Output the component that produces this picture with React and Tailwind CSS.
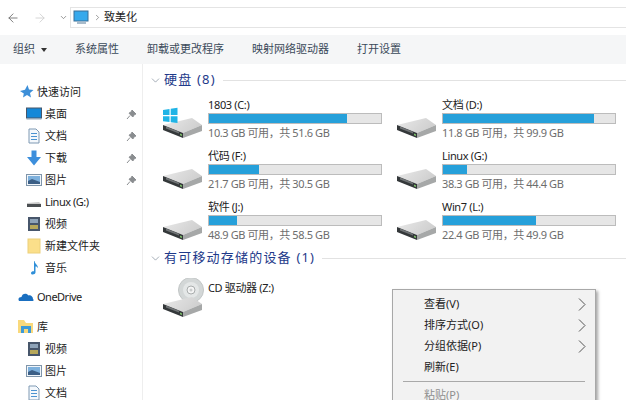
import { ArrowLeft, ArrowRight, ChevronDown, ChevronRight } from 'lucide-react';

const font = { fontFamily: '"Noto Sans", "Noto Sans CJK SC", sans-serif' };

const drives = [
  { name: '1803 (C:)', free: '10.3 GB 可用，共 51.6 GB', used: 80, win: true },
  { name: '文档 (D:)', free: '11.8 GB 可用，共 99.9 GB', used: 88 },
  { name: '代码 (F:)', free: '21.7 GB 可用，共 30.5 GB', used: 29 },
  { name: 'Linux (G:)', free: '38.3 GB 可用，共 44.4 GB', used: 14 },
  { name: '软件 (J:)', free: '48.9 GB 可用，共 58.5 GB', used: 16 },
  { name: 'Win7 (L:)', free: '22.4 GB 可用，共 49.9 GB', used: 54 },
];

// Hard disk drawing, shared by all the drive rows
function Hdd({ win, cd }) {
  return (
    <svg width="42" height="42" viewBox="0 0 42 42" className="shrink-0">
      <defs>
        <linearGradient id="hddTop" x1="0" y1="0" x2="1" y2="0.4">
          <stop offset="0" stopColor="#e9e9e9" />
          <stop offset="1" stopColor="#cfcfcf" />
        </linearGradient>
      </defs>
      {cd && (
        <g>
          <circle cx="29" cy="12" r="12.5" fill="#d3d7d7" stroke="#c2c6c6" />
          <circle cx="29" cy="12" r="8" fill="#e4e7e7" />
          <circle cx="29" cy="12" r="4" fill="#f5f5f5" stroke="#a9adad" />
          <circle cx="29" cy="12" r="1.5" fill="#c9cccc" />
        </g>
      )}
      <path d="M1 26 L30 19 L40 26 L21 34 Z" fill="url(#hddTop)" />
      <path d="M1 26 L21 34 L21 39 L1 31 Z" fill="#34383a" />
      <path d="M21 34 L40 26 L40 32 L21 39 Z" fill="#a6a8a8" />
      <path d="M4 27.5 L17 32.8 L17 34.5 L4 29.5 Z" fill="#6f7375" />
      <path d="M18 34.6 L20 35.4 L20 37 L18 36.2 Z" fill="#7fc36b" />
      {win && (
        <g fill="#20b4e6">
          <path d="M1 11 L7.5 10 L7.5 16 L1 16 Z" />
          <path d="M8.7 9.7 L15.5 8.7 L15.5 16 L8.7 16 Z" />
          <path d="M1 17.2 L7.5 17.2 L7.5 23 L1 22.2 Z" />
          <path d="M8.7 17.2 L15.5 17.2 L15.5 24 L8.7 23.2 Z" />
        </g>
      )}
    </svg>
  );
}

function Pin() {
  return (
    <svg width="11" height="11" viewBox="0 0 11 11" className="shrink-0">
      <path d="M6 1 L10 5 L8.5 5.5 L6.8 8 L3 4.2 L5.5 2.5 Z M4 6.5 L1 10" fill="#8a8d90" stroke="#8a8d90" />
    </svg>
  );
}

function Ico({ kind }) {
  if (kind === 'star') return (
    <svg width="16" height="16" viewBox="0 0 16 16"><path d="M9.5 1 L11 5.5 L15.5 6 L12 9 L13 13.5 L9 11 L5 13.5 L5.8 9.5 L2 7 L7 5.8 Z" fill="#3d8fd8" /></svg>
  );
  if (kind === 'desktop') return (
    <svg width="16" height="16" viewBox="0 0 16 16"><rect x="0.5" y="2" width="15" height="10" fill="#1488d8" stroke="#46566a" /><rect x="0.5" y="12" width="15" height="1.5" fill="#8fa3b5" /></svg>
  );
  if (kind === 'doc') return (
    <svg width="16" height="16" viewBox="0 0 16 16"><path d="M3 1 H10 L13 4 V15 H3 Z" fill="#f4f8fc" stroke="#7e99b3" /><rect x="5" y="5" width="6" height="1" fill="#4b93d1" /><rect x="5" y="8" width="6" height="1" fill="#4b93d1" /><rect x="5" y="11" width="6" height="1" fill="#4b93d1" /></svg>
  );
  if (kind === 'down') return (
    <svg width="16" height="16" viewBox="0 0 16 16"><path d="M5.5 0.5 H10.5 V7 H15 L8 15.5 L1 7 H5.5 Z" fill="#3d8fdc" /></svg>
  );
  if (kind === 'pic') return (
    <svg width="16" height="16" viewBox="0 0 16 16"><rect x="0.5" y="2.5" width="15" height="11" fill="#f0f5fa" stroke="#7f95aa" /><path d="M2 4 H14 V12 H2 Z" fill="#7eb1dd" /><path d="M2 9 L6 7 L14 10 V12 H2 Z" fill="#3c5f86" /></svg>
  );
  if (kind === 'drive') return (
    <svg width="16" height="16" viewBox="0 0 16 16"><path d="M1 9 L13 8 L15 10 H1 Z" fill="#c9c9c9" /><rect x="1" y="10" width="14" height="3" fill="#4b4f52" /></svg>
  );
  if (kind === 'video') return (
    <svg width="16" height="16" viewBox="0 0 16 16"><rect x="2" y="1" width="12" height="14" fill="#47566b" /><rect x="4" y="3" width="8" height="4" fill="#8ea3b8" /><rect x="4" y="9" width="8" height="4" fill="#b7a85a" /></svg>
  );
  if (kind === 'folder') return (
    <svg width="16" height="16" viewBox="0 0 16 16"><rect x="2" y="1" width="12" height="14" fill="#fbdf8a" stroke="#ecd07a" /></svg>
  );
  if (kind === 'music') return (
    <svg width="16" height="16" viewBox="0 0 16 16"><path d="M8 1 L8.5 1 C9 4 12 5 12 8 L10.5 6.5 L9.5 6.5 V12.5 C9.5 14.5 5 15.5 5 13 C5 11.5 7 11 8 11.3 Z" fill="#2f8fd8" /></svg>
  );
  if (kind === 'cloud') return (
    <svg width="16" height="16" viewBox="0 0 16 16"><path d="M1 12 C-0.5 9.5 1.5 8 3.5 8 C4 4.5 8.5 3.5 10.5 6.5 C13 5.8 15 8 15 10 C16 11 15.5 12 15 12 Z" fill="#1a6fc0" /></svg>
  );
  if (kind === 'lib') return (
    <svg width="16" height="16" viewBox="0 0 16 16"><path d="M0 1 H6 L8 4 H15 V14 H0 Z" fill="#f9d97c" /><path d="M3 7 H13 V14 H10 V10 H6 V14 H3 Z" fill="#3d9ad8" /></svg>
  );
  return null;
}

function NavRow({ icon, label, pin, top, latin, cn }) {
  return (
    <div className={`flex h-[22px] items-center text-[11px] text-[#222] ${top ? 'pl-[18px]' : 'pl-[26px]'} ${cn || ''}`}>
      <span className="flex w-[19px] shrink-0"><Ico kind={icon} /></span>
      <span className={`flex-1 ${latin ? 'tracking-[-0.5px]' : ''}`}>{label}</span>
      {pin && <span className="mr-[5px]"><Pin /></span>}
    </div>
  );
}

function DriveItem({ d }) {
  return (
    <div className="flex h-[51px] items-start">
      <div className="mt-[3px] w-[46px] shrink-0"><Hdd win={d.win} /></div>
      <div className="w-[174px]">
        <div className="h-[17px] text-[11px] leading-[17px] tracking-[-0.35px] text-[#222]">{d.name}</div>
        <div className="h-[11px] border border-[#bcbcbc] bg-[#e6e6e6]">
          <div className="h-full bg-[#26a0da]" style={{ width: `${d.used}%` }} />
        </div>
        <div className="h-[17px] text-[11px] leading-[17px] tracking-[-0.4px] text-[#6d6d6d]">{d.free}</div>
      </div>
    </div>
  );
}

function GroupTitle({ title, cn }) {
  return (
    <div className={`flex h-[22px] items-center ${cn || ''}`}>
      <ChevronDown size={13} strokeWidth={1} className="text-[#5a6a7a]" />
      <span className="ml-[2px] text-[13px] tracking-[1.2px] text-[#1e3a8a]">{title}</span>
      <div className="ml-[7px] h-px flex-1 bg-[#e2e2e2]" />
    </div>
  );
}

function MenuRow({ label, arrow, off }) {
  return (
    <div className={`flex h-[21px] items-center pl-[31px] pr-[9px] text-[11px] ${off ? 'text-[#8f8f8f]' : 'text-[#222]'}`}>
      <span className="flex-1">{label}</span>
      {arrow && (
        <svg width="8" height="13" viewBox="0 0 8 13" className="shrink-0">
          <path d="M1 0.5 L7 6.5 L1 12.5" fill="none" stroke="#555" strokeWidth="1" />
        </svg>
      )}
    </div>
  );
}

export default function App() {
  return (
    <div className="relative flex h-[400px] w-[626px] flex-col overflow-hidden bg-white" style={font}>
      {/* address bar */}
      <div className="flex h-[35px] shrink-0 items-center pl-[6px]">
        <ArrowLeft size={14} strokeWidth={1.5} className="text-[#6e6e6e]" />
        <ArrowRight size={14} strokeWidth={1.5} className="ml-[13px] text-[#d0d0d0]" />
        <ChevronDown size={9} strokeWidth={2} className="ml-[12px] text-[#777]" />
        <div className="ml-[2px] flex h-[21px] flex-1 items-center border-y border-l border-[#e4e4e4] pl-[1px]">
          <svg width="18" height="16" viewBox="0 0 18 16">
            <rect x="2" y="1" width="14" height="10" fill="#37a9ec" stroke="#3b6f97" />
            <rect x="5" y="12" width="9" height="2" fill="#a9bccb" />
          </svg>
          <ChevronRight size={9} strokeWidth={1.5} className="ml-[3px] text-[#555]" />
          <span className="ml-[2px] text-[11px] text-[#222]">致美化</span>
        </div>
      </div>

      {/* toolbar */}
      <div className="flex h-[29px] shrink-0 items-center bg-[#f5f6f7] pl-[13px] text-[11px] text-[#3b4a5a]">
        <span>组织</span>
        <span className="ml-[6px] h-0 w-0 border-x-[3.5px] border-t-[4px] border-x-transparent border-t-[#333]" />
        <span className="ml-[28px]">系统属性</span>
        <span className="ml-[28px]">卸载或更改程序</span>
        <span className="ml-[28px]">映射网络驱动器</span>
        <span className="ml-[28px]">打开设置</span>
      </div>

      <div className="flex min-h-0 flex-1">
        {/* nav pane */}
        <div className="w-[143px] shrink-0 border-r border-[#eeeeee] pt-[17px]">
          <NavRow top icon="star" label="快速访问" />
          <NavRow icon="desktop" label="桌面" pin />
          <NavRow icon="doc" label="文档" pin />
          <NavRow icon="down" label="下载" pin />
          <NavRow icon="pic" label="图片" pin />
          <NavRow icon="drive" label="Linux (G:)" latin />
          <NavRow icon="video" label="视频" />
          <NavRow icon="folder" label="新建文件夹" />
          <NavRow icon="music" label="音乐" />
          <NavRow top icon="cloud" label="OneDrive" latin cn="mt-[7px]" />
          <NavRow top icon="lib" label="库" cn="mt-[8px]" />
          <NavRow icon="video" label="视频" />
          <NavRow icon="pic" label="图片" />
          <NavRow icon="doc" label="文档" />
        </div>

        {/* drive list */}
        <div className="min-w-0 flex-1 pl-[6px] pt-[5px]">
          <GroupTitle title="硬盘 (8)" />
          <div className="mt-[5px] grid grid-cols-[234px_220px] pl-[13px]">
            {drives.map((d) => <DriveItem key={d.name} d={d} />)}
          </div>
          <GroupTitle title="有可移动存储的设备 (1)" cn="-mt-[2px]" />
          <div className="mt-[9px] flex items-start pl-[13px]">
            <div className="w-[46px]"><Hdd cd /></div>
            <span className="mt-[1px] text-[11px] leading-[17px] tracking-[-0.35px] text-[#222]">CD 驱动器 (Z:)</span>
          </div>
        </div>
      </div>

      {/* context menu */}
      <div className="absolute left-[392px] top-[289px] w-[204px] border border-[#a8a8a8] bg-[#f2f2f2] pt-[4px] shadow-[2px_2px_3px_rgba(0,0,0,0.35)]">
        <MenuRow label="查看(V)" arrow />
        <MenuRow label="排序方式(O)" arrow />
        <MenuRow label="分组依据(P)" arrow />
        <MenuRow label="刷新(E)" />
        <div className="mx-[10px] my-[3px] h-px bg-[#a9a9a9]" />
        <MenuRow label="粘贴(P)" off />
        <div className="h-[30px]" />
      </div>
    </div>
  );
}
